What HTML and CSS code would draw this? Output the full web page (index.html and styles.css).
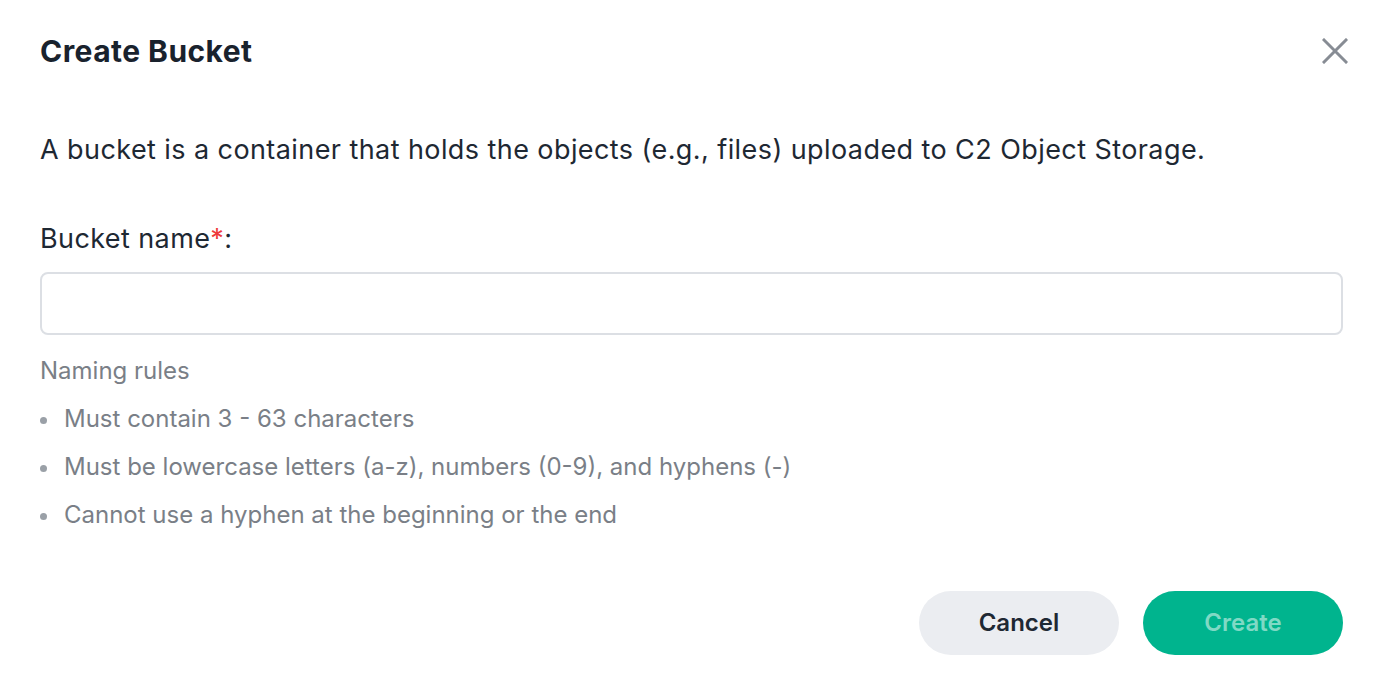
FILE: index.html
```html
<!DOCTYPE html>
<html>
<head>
<meta charset="utf-8">
<link rel="stylesheet" href="styles.css">
</head>
<body>
<div class="modal">
  <div class="header">
    <h1 class="title">Create Bucket</h1>
    <button class="close" aria-label="Close">
      <svg width="26" height="26" viewBox="0 0 26 26"><path d="M2 2L24 24M24 2L2 24" stroke="#878c94" stroke-width="3" stroke-linecap="square" fill="none"/></svg>
    </button>
  </div>
  <p class="desc">A bucket is a container that holds the objects (e.g., files) uploaded to C2 Object Storage.</p>
  <label class="label">Bucket name<span class="req">*</span>:</label>
  <input class="input" type="text">
  <div class="rules">
    <div class="rules-title">Naming rules</div>
    <ul class="rules-list">
      <li>Must contain 3 - 63 characters</li>
      <li>Must be lowercase letters (a-z), numbers (0-9), and hyphens (-)</li>
      <li>Cannot use a hyphen at the beginning or the end</li>
    </ul>
  </div>
  <div class="footer">
    <button class="btn btn-cancel">Cancel</button>
    <button class="btn btn-create">Create</button>
  </div>
</div>
</body>
</html>
```
FILE: styles.css
```css
* { box-sizing: border-box; }
html, body { margin: 0; padding: 0; background: #fff; }
body { font-family: Inter, Roboto, sans-serif; color: #1e2833; }
.modal { padding: 0 43px 0 40px; }
.header { display: flex; justify-content: space-between; align-items: center; height: 102px; }
.title { margin: 0; font-size: 30px; font-weight: 700; letter-spacing: 0.45px; color: #19222d; }
.close { background: none; border: none; padding: 0; margin-right: -5px; display: flex; }
.desc { margin: 0; font-size: 27px; letter-spacing: 0.42px; line-height: 96px; height: 96px; }
.label { display: block; font-size: 27px; letter-spacing: 0.4px; line-height: 36px; margin-top: 23px; }
.req { color: #ee3a3a; }
.input { display: block; width: 100%; height: 63px; border: 2px solid #dcdfe4; border-radius: 8px; margin-top: 15px; font-size: 26px; padding: 0 16px; outline: none; }
.rules { color: #7a7f87; font-size: 24px; margin-top: 18px; }
.rules-title { line-height: 36px; }
.rules-list { margin: 0; padding: 0; list-style: none; }
.rules-list li { line-height: 36px; margin-top: 12px; position: relative; padding-left: 24px; }
.rules-list li::before { content: ""; position: absolute; left: 0; top: 16px; width: 7px; height: 7px; border-radius: 50%; background: #9aa0a7; }
.footer { display: flex; justify-content: flex-end; gap: 24px; margin-top: 58px; }
.btn { width: 200px; height: 64px; padding: 0 0 2px; border-radius: 32px; border: none; font-family: Inter, Roboto, sans-serif; font-size: 24px; font-weight: 600; }
.btn-cancel { background: #ebedf1; color: #1e2833; }
.btn-create { background: #00b48e; color: #80d9c5; }
```
